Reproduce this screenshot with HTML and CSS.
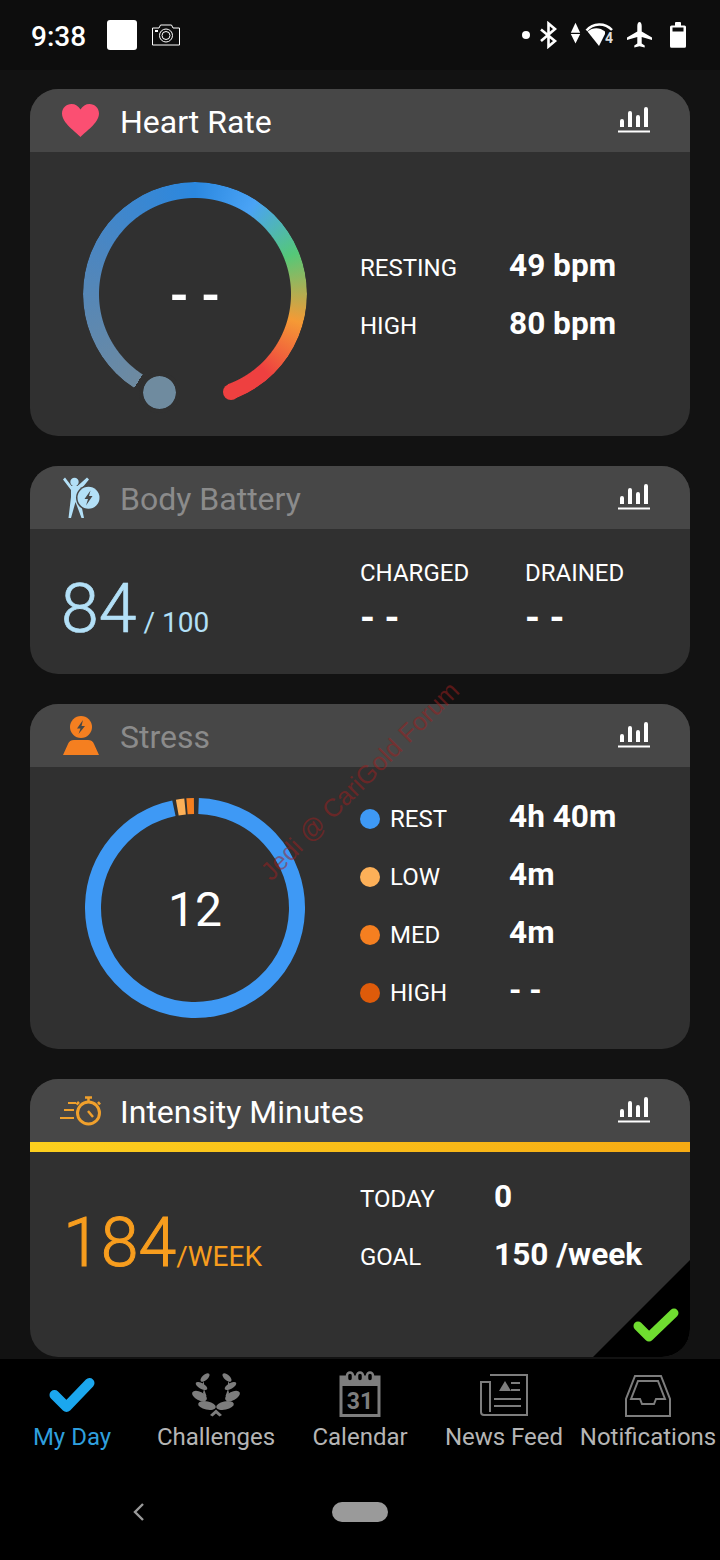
FILE: index.html
```html
<!DOCTYPE html>
<html lang="en">
<head>
    <meta charset="UTF-8">
    <meta name="viewport" content="width=device-width, initial-scale=1.0">
    <title>My Day</title>
    <link rel="stylesheet" href="styles.css">
</head>
<body>
    <svg class="defs" width="0" height="0">
        <symbol id="chart" viewBox="0 0 32 26">
            <path fill="#fff" d="M2 20v-6a2 2 0 0 1 4 0v6zM10 20V6a2 2 0 0 1 4 0v14zM18 20V10a2 2 0 0 1 4 0v10zM26 20V2a2 2 0 0 1 4 0v18zM0 23.500h32v2H0z"/>
        </symbol>
        <symbol id="laurel" viewBox="0 0 48 44">
            <g fill="#7d7d7d">
                <ellipse cx="13" cy="4.500" rx="5.500" ry="2.800" transform="rotate(-42 13 4.500)"/>
                <ellipse cx="9.500" cy="13" rx="6.500" ry="2.800" transform="rotate(30 9.500 13)"/>
                <ellipse cx="7.500" cy="23" rx="8" ry="4.200" transform="rotate(28 7.500 23)"/>
                <ellipse cx="15" cy="32.500" rx="9" ry="4.200" transform="rotate(12 15 32.500)"/>
                <path d="M12 8l-1.500 3 1.500 2zM12 16l-1 4 2 5 1.500-2z"/>
            </g>
        </symbol>
    </svg>

    <!-- Status bar -->
    <div class="status-bar">
        <span class="clock">9:38</span>
        <span class="status-square"></span>
        <svg class="status-camera" width="28" height="22" viewBox="0 0 28 22" fill="none" stroke="#fff" stroke-width="1">
            <path d="M.5 4h6.500l1.500-3h11l1.500 3h6.500v17H.5z"/>
            <circle cx="14" cy="11.500" r="6.500"/>
            <circle cx="14" cy="11.500" r="4"/>
            <path d="M3 7h3" stroke-width="2"/>
        </svg>
        <div class="status-right">
            <svg width="170" height="28" viewBox="0 0 170 28">
                <circle cx="6" cy="14" r="4" fill="#fff"/>
                <path d="M21 8.500l14 11.500-6.500 5.500V2.500L35 8 21 20" fill="none" stroke="#fff" stroke-width="2.600"/>
                <path d="M55.500 1.700l4.700 10h-9.400zM50.800 13h9.400l-4.700 9.500z" fill="#fff"/>
                <path d="M66.500 9.500C73 1.500 85 1.500 92 9" fill="none" stroke="#fff" stroke-width="2.500"/>
                <path d="M67.500 10.500C72.500 6 80 6 85 10.500V13L79 25z" fill="#fff"/>
                <text x="85" y="22" class="wifi-four">4</text>
                <path d="M119.500 1c1.400 0 2.200 2 2.200 4v5.500l10.300 6v2.500l-10.300-3v6.500l3 2v2l-5.200-1.300-5.200 1.300v-2l3-2V16l-10.300 3v-2.500l10.300-6V5c0-2 .8-4 2.200-4z" fill="#fff"/>
                <path d="M155 4.500v-2.500a1 1 0 0 1 1-1h4a1 1 0 0 1 1 1v2.500h3.500a1.500 1.500 0 0 1 1.500 1.500V25.200a1.500 1.500 0 0 1-1.500 1.500h-13a1.500 1.500 0 0 1-1.500-1.500V6a1.500 1.500 0 0 1 1.500-1.500zM152.500 6.500v4h11v-4z" fill="#fff" fill-rule="evenodd"/>
            </svg>
        </div>
    </div>

    <div class="feed">
        <!-- Heart rate -->
        <section class="card">
            <header class="card-head">
                <span class="head-icon">
                    <svg width="37" height="33" viewBox="0 0 37 33"><path fill="#fb4f72" d="M18.500 33C14 28 0 19 0 9.500 0 4 4.300 0 9.500 0c3.700 0 7 2 9 5.500 2-3.500 5.300-5.500 9-5.500C32.700 0 37 4 37 9.500 37 19 23 28 18.500 33z"/></svg>
                </span>
                <h2 class="card-title">Heart Rate</h2>
                <svg class="chart-icon"><use href="#chart"/></svg>
            </header>
            <div class="card-body heart-body">
                <div class="gauge">
                    <div class="gauge-ring"></div>
                    <span class="gauge-cap"></span>
                    <span class="gauge-dot"></span>
                    <span class="gauge-value">- -</span>
                </div>
                <div class="stats">
                    <div class="stat-row"><span class="stat-label">RESTING</span><span class="stat-value">49 bpm</span></div>
                    <div class="stat-row"><span class="stat-label">HIGH</span><span class="stat-value">80 bpm</span></div>
                </div>
            </div>
        </section>

        <!-- Body battery -->
        <section class="card">
            <header class="card-head">
                <span class="head-icon">
                    <svg width="38" height="42" viewBox="0 0 38 42">
                        <circle cx="12.500" cy="5" r="4.200" fill="#b3e0f7"/>
                        <path fill="#b3e0f7" d="M1 2.500L3 .5 9.500 9h6L25 .5l2 2-9 11v8l4 19.500h-2.500L13.500 25 9 41H6.500L9 20V13z"/>
                        <circle cx="26.500" cy="20.800" r="12.500" fill="#474747"/>
                        <circle cx="26.500" cy="20.800" r="11" fill="#b3e0f7"/>
                        <path fill="#474747" d="M28.500 13.500l-6 8.500h3.500l-2 6.500 6.500-9.500h-3.500z"/>
                    </svg>
                </span>
                <h2 class="card-title dim">Body Battery</h2>
                <svg class="chart-icon"><use href="#chart"/></svg>
            </header>
            <div class="card-body battery-body">
                <div class="battery-score"><span class="battery-num">84</span><span class="battery-max">/ 100</span></div>
                <div class="battery-col charged">
                    <span class="stat-label">CHARGED</span>
                    <span class="stat-value">- -</span>
                </div>
                <div class="battery-col">
                    <span class="stat-label">DRAINED</span>
                    <span class="stat-value">- -</span>
                </div>
            </div>
        </section>

        <!-- Stress -->
        <section class="card">
            <header class="card-head">
                <span class="head-icon">
                    <svg width="36" height="39" viewBox="0 0 36 39">
                        <circle cx="18" cy="11" r="11" fill="#f57f20"/>
                        <path fill="#474747" d="M20 4l-6 8.500h3.500L15.500 18l6.500-8h-3.500z"/>
                        <path fill="#f57f20" d="M11 24h14c3 0 5 1.500 6 4l5 11H0l5-11c1-2.500 3-4 6-4z"/>
                    </svg>
                </span>
                <h2 class="card-title dim">Stress</h2>
                <svg class="chart-icon"><use href="#chart"/></svg>
            </header>
            <div class="card-body stress-body">
                <div class="ring">
                    <svg width="220" height="222" viewBox="0 0 220 222" fill="none" stroke-width="16">
                        <circle cx="110" cy="111" r="102" pathLength="360" stroke="#3e99f5" stroke-dasharray="346 14" transform="rotate(-88 110 111)"/>
                        <circle cx="110" cy="111" r="102" pathLength="360" stroke="#fdb058" stroke-dasharray="4.500 355.500" transform="rotate(-100 110 111)"/>
                        <circle cx="110" cy="111" r="102" pathLength="360" stroke="#f57f20" stroke-dasharray="4 356" transform="rotate(-94.500 110 111)"/>
                    </svg>
                    <span class="ring-value">12</span>
                </div>
                <div class="stats">
                    <div class="stat-row"><span class="stat-label"><i class="dot rest"></i>REST</span><span class="stat-value">4h 40m</span></div>
                    <div class="stat-row"><span class="stat-label"><i class="dot low"></i>LOW</span><span class="stat-value">4m</span></div>
                    <div class="stat-row"><span class="stat-label"><i class="dot med"></i>MED</span><span class="stat-value">4m</span></div>
                    <div class="stat-row"><span class="stat-label"><i class="dot high"></i>HIGH</span><span class="stat-value">- -</span></div>
                </div>
            </div>
        </section>

        <!-- Intensity minutes -->
        <section class="card">
            <header class="card-head">
                <span class="head-icon">
                    <svg width="41" height="30" viewBox="0 0 41 30" fill="none" stroke="#f0a02c" stroke-width="2">
                        <circle cx="28.500" cy="17" r="11" stroke-width="3"/>
                        <path d="M25 1.500h7M28.500 2v4M19 6l-2.500 2.500M38 6l2 2.500" stroke-width="2.500"/>
                        <path d="M28 15l5 6" stroke-width="2.500"/>
                        <path d="M8 7h8M4 14h10M0 22h14"/>
                    </svg>
                </span>
                <h2 class="card-title">Intensity Minutes</h2>
                <svg class="chart-icon"><use href="#chart"/></svg>
            </header>
            <div class="goal-bar"></div>
            <div class="card-body intensity-body">
                <div class="week-score"><span class="week-num">184</span><span class="week-unit">/WEEK</span></div>
                <div class="stats intensity-stats">
                    <div class="stat-row"><span class="stat-label">TODAY</span><span class="stat-value">0</span></div>
                    <div class="stat-row"><span class="stat-label">GOAL</span><span class="stat-value">150 /week</span></div>
                </div>
                <div class="goal-corner"></div>
                <svg class="goal-check" width="46" height="36" viewBox="0 0 46 36"><path d="M5 18l11 11L41 5" fill="none" stroke="#6fdc30" stroke-width="9" stroke-linecap="round" stroke-linejoin="round"/></svg>
            </div>
        </section>
    </div>

    <div class="watermark">Jedi @ CariGold Forum</div>

    <!-- Bottom tabs -->
    <nav class="tabs">
        <div class="tab active">
            <svg class="tab-check" width="46" height="36" viewBox="0 0 46 36"><path d="M5.500 17l12 12L40.500 5" fill="none" stroke="#1ba7ee" stroke-width="10" stroke-linecap="round" stroke-linejoin="round"/></svg>
            <span>My Day</span>
        </div>
        <div class="tab">
            <svg width="48" height="44" viewBox="0 0 48 44">
                <use href="#laurel" width="48" height="44"/>
                <use href="#laurel" width="48" height="44" transform="matrix(-1 0 0 1 48 0)"/>
                <path fill="#7d7d7d" d="M24 36.500l6 5.500-2.500 1.500-3.500-3-3.500 3-2.500-1.500z"/>
            </svg>
            <span>Challenges</span>
        </div>
        <div class="tab">
            <svg width="42" height="46" viewBox="0 0 42 46">
                <path d="M2 6h38v38.500H2z" fill="none" stroke="#7d7d7d" stroke-width="3"/>
                <path d="M2 6h38v9H2z" fill="#7d7d7d"/>
                <g fill="#000" stroke="#7d7d7d" stroke-width="2.500">
                    <rect x="8" y="1.500" width="6" height="9" rx="3"/>
                    <rect x="18" y="1.500" width="6" height="9" rx="3"/>
                    <rect x="28" y="1.500" width="6" height="9" rx="3"/>
                </g>
                <text x="21" y="38" class="cal-day">31</text>
            </svg>
            <span>Calendar</span>
        </div>
        <div class="tab">
            <svg class="tab-news" width="48" height="42" viewBox="0 0 48 42" fill="none" stroke="#7d7d7d" stroke-width="2">
                <path d="M10 1h37v40H4a3 3 0 0 1-3-3V8h9v30"/>
                <path d="M7 41h3" />
                <path d="M19 17l6-10 6 10z" fill="#7d7d7d" stroke="none"/>
                <path d="M31 9h9M31 16h9M14 25h27M14 32h27"/>
            </svg>
            <span>News Feed</span>
        </div>
        <div class="tab">
            <svg width="46" height="42" viewBox="0 0 46 42" fill="none" stroke="#7d7d7d" stroke-width="2">
                <path d="M1 41V24L10 1h26l9 23v17z"/>
                <path d="M6 24l7-18h20l7 18H31l-2 5H17l-2-5z"/>
            </svg>
            <span>Notifications</span>
        </div>
    </nav>

    <!-- Android nav -->
    <div class="sys-nav">
        <svg class="sys-back" width="14" height="20" viewBox="0 0 14 20"><path d="M11 2L3 10l8 8" fill="none" stroke="#9a9a9a" stroke-width="2.400"/></svg>
        <span class="sys-home"></span>
    </div>
</body>
</html>
```

FILE: styles.css
```css
* {
    box-sizing: border-box;
}

body {
    margin: 0;
    width: 720px;
    height: 1560px;
    overflow: hidden;
    position: relative;
    background-color: #000;
    color: #fff;
    font-family: Roboto, "Liberation Sans", sans-serif;
}

.defs {
    position: absolute;
}

/* Status bar */
.status-bar {
    height: 70px;
    background-color: #0d0d0d;
    display: flex;
    align-items: center;
    padding: 0 32px 0 31px;
}
.clock {
    font-size: 28px;
    font-weight: 500;
    width: 76px;
    margin-top: 2px;
}
.status-square {
    width: 30px;
    height: 30px;
    background-color: #fff;
    border-radius: 3px;
}
.status-camera {
    margin-left: 15px;
}
.status-right {
    margin-left: auto;
    margin-right: -2px;
    display: flex;
}
.wifi-four {
    font-size: 14px;
    font-weight: 700;
    fill: #ddd;
    font-family: Roboto, sans-serif;
}

/* Cards */
.feed {
    height: 1289px;
    overflow: hidden;
    background-color: #121212;
    padding: 19px 30px 0;
    display: flex;
    flex-direction: column;
    gap: 30px;
}
.card {
    background-color: #303030;
    border-radius: 28px;
    overflow: hidden;
    flex: none;
}
.card-head {
    height: 63px;
    background-color: #474747;
    display: flex;
    align-items: center;
    padding: 0 40px 0 30px;
}
.head-icon {
    width: 41px;
    display: flex;
    justify-content: center;
    margin-right: 19px;
}
.card-title {
    margin: 2px 0 0;
    font-size: 32px;
    font-weight: 400;
    flex: 1;
}
.card-title.dim {
    color: #8b8b8b;
}
.chart-icon {
    width: 32px;
    height: 26px;
    margin-top: -1px;
}
.card-body {
    position: relative;
    display: flex;
}

.stats {
    display: flex;
    flex-direction: column;
}
.stat-row {
    display: flex;
    align-items: center;
    height: 58px;
}
.stat-row .stat-label {
    width: 149px;
}
.stat-label {
    font-size: 24px;
    display: flex;
    align-items: center;
}
.stat-value {
    font-size: 31.600px;
    font-weight: 700;
    white-space: nowrap;
}
.stat-row .stat-value {
    margin-bottom: 6px;
}

/* Heart rate */
.heart-body {
    height: 284px;
    padding: 30px 0 0 53px;
}
.heart-body .stats {
    margin-top: 57px;
}
.gauge {
    position: relative;
    width: 224px;
    height: 224px;
    margin-right: 53px;
}
.gauge-ring {
    width: 224px;
    height: 224px;
    border-radius: 50%;
    background: conic-gradient(from 213deg, #6e8aa0 0deg, #4c86c0 80deg, #2b88e0 147deg, #4aa3f5 180deg, #55c878 215deg, #f59a35 252deg, #ee4040 285deg, #ee4040 307deg, transparent 307deg);
    -webkit-mask: radial-gradient(circle closest-side, transparent 95.500px, #000 96.500px);
    mask: radial-gradient(circle closest-side, transparent 95.500px, #000 96.500px);
}
.gauge-cap {
    position: absolute;
    left: 140px;
    top: 202px;
    width: 16px;
    height: 16px;
    border-radius: 50%;
    background-color: #ee4040;
}
.gauge-dot {
    position: absolute;
    left: 56px;
    top: 190px;
    width: 41px;
    height: 41px;
    border-radius: 50%;
    background-color: #6f8b9f;
    border: 4px solid #303030;
    background-clip: padding-box;
}
.gauge-value {
    position: absolute;
    inset: 0;
    display: flex;
    align-items: center;
    justify-content: center;
    font-size: 49px;
    font-weight: 700;
    padding-top: 3px;
}

/* Body battery */
.battery-body {
    height: 145px;
}
.battery-score {
    width: 330px;
    padding: 39px 0 0 31px;
    display: flex;
    align-items: baseline;
    color: #b3e0f7;
}
.battery-num {
    font-size: 68px;
    font-weight: 300;
    -webkit-text-stroke: 0.7px #b3e0f7;
    line-height: 82px;
}
.battery-max {
    font-size: 28px;
    margin-left: 7px;
}
.battery-col {
    display: flex;
    flex-direction: column;
    gap: 9px;
    padding-top: 30px;
}
.battery-col .stat-value {
    font-size: 38px;
    line-height: 44px;
}
.battery-col.charged {
    width: 165px;
}

/* Stress */
.stress-body {
    height: 282px;
    padding: 30px 0 0 55px;
}
.ring {
    position: relative;
    width: 220px;
    height: 222px;
    margin-right: 55px;
}
.ring-value {
    position: absolute;
    inset: 0;
    display: flex;
    align-items: center;
    justify-content: center;
    font-size: 48px;
    padding-top: 2px;
}
.stress-body .stats {
    margin-top: -7px;
}
.dot {
    width: 20px;
    height: 20px;
    border-radius: 50%;
    margin-right: 10px;
    flex: none;
}
.dot.rest {
    background-color: #3e99f5;
}
.dot.low {
    background-color: #fdb058;
}
.dot.med {
    background-color: #f57f20;
}
.dot.high {
    background-color: #de5b0a;
}

/* Intensity minutes */
.goal-bar {
    height: 10px;
    background: linear-gradient(90deg, #fdd01e, #f7ab13);
}
.intensity-body {
    height: 205px;
}
.week-score {
    width: 330px;
    padding: 51px 0 0 33px;
    display: flex;
    align-items: baseline;
    color: #f79d1e;
}
.week-num {
    font-size: 68px;
    font-weight: 300;
    -webkit-text-stroke: 1px #f79d1e;
    line-height: 80px;
}
.week-unit {
    font-size: 28px;
}
.intensity-stats {
    padding-top: 18px;
}
.intensity-stats .stat-label {
    width: 134px;
}
.goal-corner {
    position: absolute;
    right: 0;
    bottom: 0;
    width: 97px;
    height: 97px;
    background-color: #000;
    clip-path: polygon(100% 0, 100% 100%, 0 100%);
}
.goal-check {
    position: absolute;
    right: 11px;
    bottom: 13px;
}

.watermark {
    position: absolute;
    left: 360px;
    top: 781px;
    transform: translate(-50%, -50%) rotate(-45deg);
    font-family: "Liberation Sans", Arial, sans-serif;
    font-size: 25.500px;
    white-space: nowrap;
    color: rgba(160, 30, 30, 0.5);
}

/* Bottom tabs */
.tabs {
    height: 121px;
    display: grid;
    grid-template-columns: repeat(5, 144px);
    padding-top: 11px;
    background-color: #000;
}
.tab {
    display: flex;
    flex-direction: column;
    align-items: center;
    justify-content: flex-end;
    height: 83px;
    color: #b5b5b5;
    font-size: 24px;
    white-space: nowrap;
}
.tab span {
    line-height: 31px;
    margin-top: 5px;
}
.tab.active {
    color: #2f9fdd;
}
.tab-check {
    margin-bottom: 3px;
}
.tab-news {
    margin-bottom: 1px;
}
.cal-day {
    font-size: 23px;
    font-weight: 700;
    fill: #7d7d7d;
    text-anchor: middle;
    font-family: Roboto, sans-serif;
}

/* Android nav */
.sys-nav {
    height: 80px;
    position: relative;
    display: flex;
    align-items: center;
    justify-content: center;
    padding-bottom: 16px;
}
.sys-back {
    position: absolute;
    left: 132px;
    top: 22px;
}
.sys-home {
    width: 56px;
    height: 20px;
    border-radius: 10px;
    background-color: #9a9a9a;
}
```
